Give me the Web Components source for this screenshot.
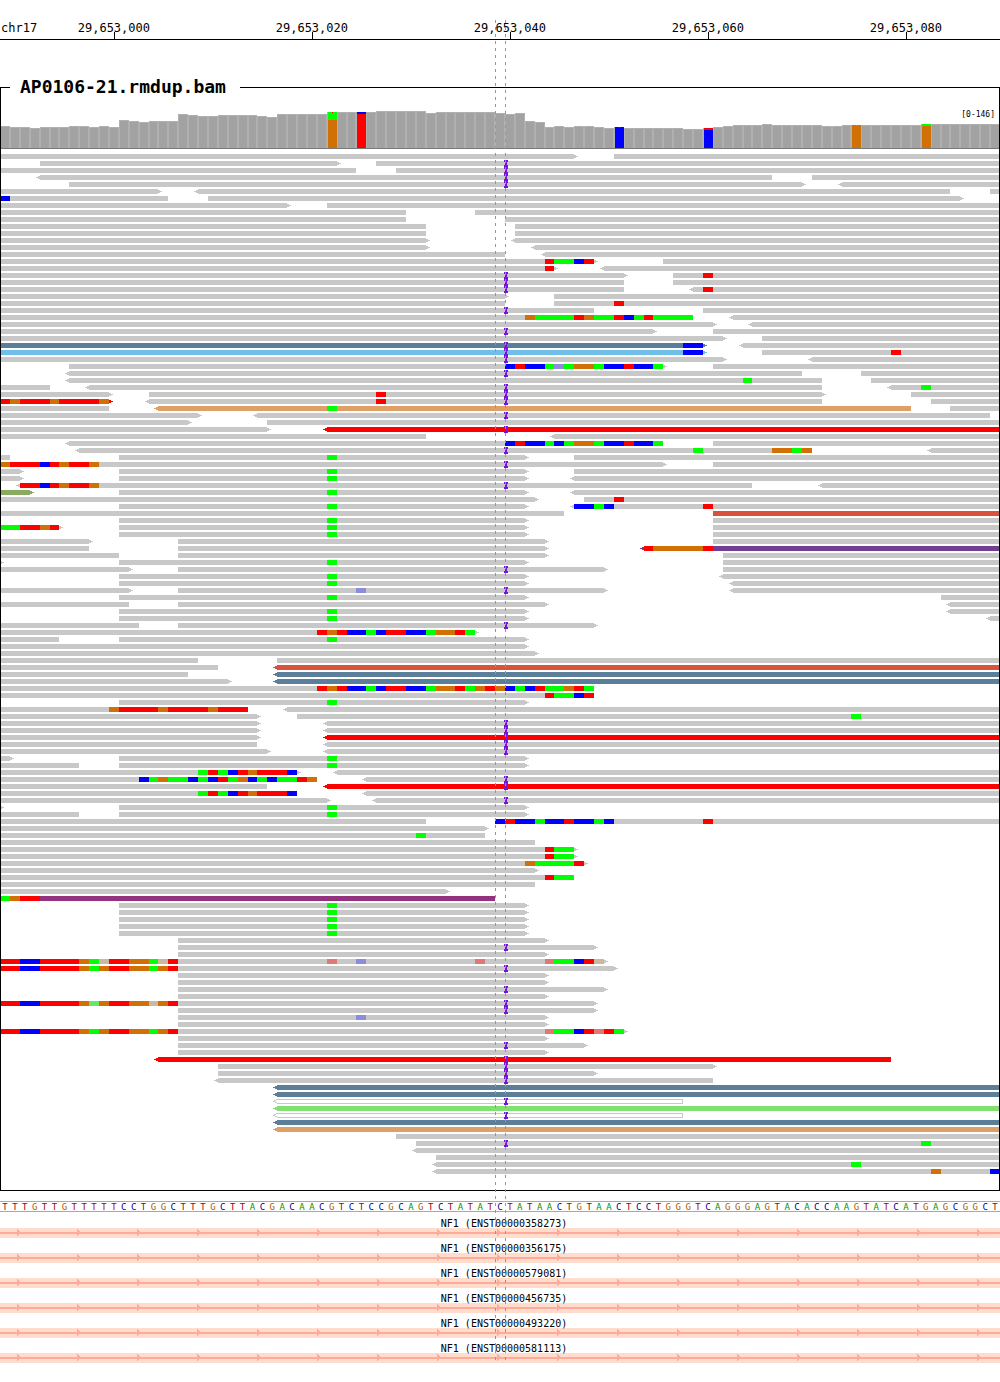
<!DOCTYPE html>
<html lang="en">
<head>
<meta charset="utf-8">
<title>AP0106-21.rmdup.bam</title>
<style>
  body { margin: 0; background: #fff; color: #000; font-family: "DejaVu Sans Mono", monospace; }
</style>
</head>
<body>
<genome-browser>
  <locus-ruler chromosome="chr17" first-tick="29653000" first-column="12" step="20"></locus-ruler>
  <alignment-track name="AP0106-21.rmdup.bam">
    <coverage-plot range="[0-146]"></coverage-plot>
    <read-pileup></read-pileup>
  </alignment-track>
  <base-sequence bases="TTTGTTGTTTTTCCTGGCTTTGCTTACGACAACGTCTCCGCAGTCTATATCTATAACTGTAACTCCTGGGTCAGGGAGTACACCAAGTATCATGAGCGGCT"></base-sequence>
  <gene-transcript>NF1 (ENST00000358273)</gene-transcript>
  <gene-transcript>NF1 (ENST00000356175)</gene-transcript>
  <gene-transcript>NF1 (ENST00000579081)</gene-transcript>
  <gene-transcript>NF1 (ENST00000456735)</gene-transcript>
  <gene-transcript>NF1 (ENST00000493220)</gene-transcript>
  <gene-transcript>NF1 (ENST00000581113)</gene-transcript>
</genome-browser>

<script>
const COLUMNS = 101;
const BASE = {
  A: '#00ff00', C: '#0000ff', G: '#d17105', T: '#ff0000',
  a: '#68e668', c: '#8c8cdc', g: '#ccb8a2', t: '#e07878'
};
const READ = {
  gray: '#c8c8c8', steel: '#5b7f99', sky: '#6fbfe8', orange: '#dea066', red: '#ff0000',
  olive: '#8aaa62', brick: '#d9533c', violet: '#733d90', plum: '#93327f', lime: '#80e070'
};

const rect = (x, y, w, h, fill) => `<rect x="${x}" y="${y}" width="${w}" height="${h}" fill="${fill}"/>`;

class GenomeBrowser extends HTMLElement {
  constructor() {
    super();
    this.attachShadow({ mode: 'open' }).innerHTML = `
      <style>
        :host { display: block; position: relative; overflow: hidden; padding-bottom: 19px; }
        .guide {
          position: absolute; top: 20px; bottom: 22px; width: 1px;
          background: repeating-linear-gradient(to bottom, #969696 0 3px, transparent 3px 7px);
          pointer-events: none;
        }
        .from { left: calc(100% * 50 / 101); }
        .to { left: calc(100% * 51 / 101); }
      </style>
      <slot></slot>
      <div class="guide from"></div>
      <div class="guide to"></div>`;
  }
}

class LocusRuler extends HTMLElement {
  connectedCallback() {
    const first = +this.getAttribute('first-tick');
    const column = +this.getAttribute('first-column');
    const step = +this.getAttribute('step');
    let ticks = '';
    for (let i = 0; column + i * step <= COLUMNS; i++) {
      const label = (first + i * step).toLocaleString('en-US');
      ticks += `<div class="tick" style="grid-column:${column + i * step}"><span>${label}</span><i></i></div>`;
    }
    this.attachShadow({ mode: 'open' }).innerHTML = `
      <style>
        :host {
          display: grid; grid-template-columns: repeat(${COLUMNS}, minmax(0, 1fr));
          padding-top: 21px; border-bottom: 1px solid #000;
          font-size: 12px; line-height: 14px; white-space: nowrap;
        }
        .name { grid-column: 1; grid-row: 1; padding-left: 1px; }
        .tick { grid-row: 1; display: flex; flex-direction: column; align-items: center; }
        i { width: 1px; height: 7px; margin-top: -3px; border-right: 1px solid #000; }
      </style>
      <span class="name">${this.getAttribute('chromosome')}</span>${ticks}`;
  }
}

class AlignmentTrack extends HTMLElement {
  connectedCallback() {
    this.attachShadow({ mode: 'open' }).innerHTML = `
      <style>
        :host { display: block; margin-top: 37px; }
        fieldset { margin: 0; padding: 0 0 14px; border: 1px solid #000; min-width: 0; }
        legend { margin-left: 9px; padding: 0 14px 2px 10px; font-size: 18px; font-weight: bold; line-height: 19px; }
      </style>
      <fieldset><legend>${this.getAttribute('name')}</legend><slot></slot></fieldset>`;
  }
}

/* Shared by the drawn tracks: maps base columns to whole pixels inside the one-pixel track frame. */
class ColumnPlot extends HTMLElement {
  connectedCallback() {
    this.attachShadow({ mode: 'open' }).innerHTML = `
      <style>
        :host { display: block; position: relative; }
        svg { display: block; width: 100%; height: ${this.plotHeight}px; overflow: hidden; }
        .range { position: absolute; top: 12px; right: 4px; font-size: 8px; line-height: 10px; }
        ${this.styles || ''}
      </style>
      <svg shape-rendering="crispEdges" aria-hidden="true"></svg>
      ${this.hasAttribute('range') ? `<span class="range">${this.getAttribute('range')}</span>` : ''}`;
    this.paint();
    new ResizeObserver(() => this.paint()).observe(this);
  }
  paint() {
    const width = this.clientWidth + 2;
    this.shadowRoot.querySelector('svg').innerHTML = this.draw(k => Math.round(k * width / COLUMNS) - 1);
  }
}

class CoveragePlot extends ColumnPlot {
  get plotHeight() { return 51; }
  draw(x) {
    // [number of columns, column height]
    const runs = [[1,22],[2,21],[1,20],[3,21],[2,22],[1,21],[1,22],[1,21],[1,28],[1,27],[1,26],[3,27],
      [1,34],[1,33],[2,32],[4,33],[1,32],[1,31],[5,34],[5,36],[5,37],[1,35],[6,36],[1,35],[1,34],[1,35],
      [1,27],[1,26],[1,21],[1,22],[1,21],[2,22],[1,21],[1,20],[1,21],[6,20],[2,19],[1,20],[1,21],[1,22],
      [3,23],[1,24],[5,23],[2,22],[8,23],[8,24]];
    // column: bases from the top, with their heights
    const variants = {
      33: [['A', 8], ['G', 28]], 36: [['C', 2], ['T', 34]], 62: [['C', 21]],
      71: [['T', 2], ['C', 18]], 86: [['G', 23]], 93: [['A', 2], ['G', 22]]
    };
    const specks = { 33: 'T', 62: 'T', 86: 'A' };
    let out = '', k = 0;
    for (const [count, height] of runs) {
      for (let n = 0; n < count; n++, k++) {
        const left = x(k), top = 50 - height;
        out += rect(left, top, x(k + 1) - left, height, '#b0b0b0');
        if (variants[k]) {
          let y = top;
          for (const [base, h] of variants[k]) { out += rect(left + 1, y, 9, h, BASE[base]); y += h; }
          if (specks[k]) out += rect(left + 5, top, 1, 1, BASE[specks[k]]);
        } else {
          out += rect(left + 1, top + 1, x(k + 1) - left - 2, height - 1, '#a2a2a2');
        }
      }
    }
    return out + rect(-1, 50, x(COLUMNS) + 1, 1, '#787878');
  }
}

/* One line per row. "<4-38>" is a read over columns 4 to 38 with its arrow heads, "33A" puts
   mismatched bases from column 33 on (lower case: low quality), "I" marks the insertion. */
const ROWS = `
0-58> 62-101
4-34> 38-101 I
0-36 40-101 I
<4-78 82-101 I
7-81> <85-101 I
0-16> <20-96 100-101
0-17 0C 21-97>
0-29> 33-101
0-41 48-101
0-41 51-101
0-43 52-101
0-43 52-101
0-43> <52-101
0-43> <54-101
0-51 <55-101
0-60> 55TAACT 67-101
0-56> 55T <61-101
0-63> 68-101 71T I
0-63 68-101 I
0-63 <70-101 71T I
0-51> 56-101
0-51 56-101 62T
0-60 71-101 I
0-70 53GAAAATGAATCATAAAA <74-101
0-72> <76-101
0-66> 72-101 I
0-73> 77-101
steel:0-71> 69CC <75-101 I
sky:0-71> 69CC 77-101 90T I
0-73> <82-101 I
7-67> 51CTCCAcAGGACCTCCA 72-101
<7-81 87-101 I
<7-83 75A 88-101
0-5 <9-83 <90-101 93A I
0-11> 15-83> 38T 92-101 I
red:0-11> 0TGTTTGTTTTG <15-83 38T 94-101 I
0-11 orange:<16-92 33A 96-101
0-20> <26-100 I
0-19> 27-101
0-27> red:<33-101 I
0-43 <56-101
<7-67 51CTCCACAGGACCTCCA 72-101
<8-82 70A 78GGAG <94-101 I
0-1 12-53> 33A 58-101
0-67> 0GTTTCTGTTG 72-101 I
0-2> 12-53> 33A 58-101
0-2> 12-53> 33A <58-101
<2-76 2TTCTGTTG <83-101 I
olive:0-3> 12-53> 33A <58-101
0-54> 59-101 62T
12-53> 33A <58-101 58CCAC 71T
0-57 brick:72-101
12-53> 33A 72-101
0-6> 0AATTGT 12-53> 33A 72-101
12-53> 33A 72-101
0-9> 18-55> 72-101
0-9 18-55> violet:<65-101 65TGGGGGT
0-12 18-55> 73-101
0-0> 12-53> 33A 73-101
0-13> 18-61> 73-101 I
12-53> 33A <73-101
12-53> 33A <74-101
0-13> 18-61> 36c <74-101 I
12-53> 33A 95-101
0-13 18-55> <96-101
12-53> 33A <96-101
12-53> 33A <100-101
0-14 18-60> I
0-48> 32TGTCCACTTCCAGGTA
0-6 12-53> 33A
0-53>
0-54>
0-20 28-101
0-22 brick:<28-101
0-19 steel:<28-101
0-23> steel:<28-101
0-60 32TGTCCACTTCCAGGTAGTGCACTAAGTA
0-60 55TAACT
12-53> 33A
0-25 11GTTTTGTTTTGTTT <29-101
0-26> 30-101 86A
0-26> <33-101 I
0-26> <33-101 I
0-26> red:<33-101 I
0-26 <33-101 I
0-27> <33-101 I
0-1> 12-53> 33A
0-8 12-53> 33A
0-30> 20ATACTGTTTC <34-101
0-32 14CAGAACACTAGCACAATG <37-101 I
0-27 red:<33-101 I
0-30 20ATACTGTTTC <37-101
0-33> <38-101 I
0-0> 12-53> 33A
0-8 12-53> 33A
0-43 50-101 50CTCCACCTCCAC 71T
0-49>
0-49 42A
0-54
0-58> 55TAA
0-58> 55TAA
0-59> 53GAAAAT
0-54>
0-58 55TAA
0-54
0-45>
plum:0-50 0AGTT
12-53> 33A
12-53> 33A
12-53> 33A
12-53> 33A
12-53> 33A
18-55>
18-60> I
18-55>
0-61> 0TTCCTTTTGAgTTGGAgT 33t 36c 48t 55tAACTg
0-62> 0TTCCTTTTGAGTTGGAGT I
18-55>
18-55>
18-61> I
18-55>
0-60> 0TTCCTTTTGaGTTGGgGT I
18-60> I
18-55> 36c
18-55>
0-63> 0TTCCTTTTGAGTTGGAGT 55tAACTtTA
18-55>
18-59> I
18-55>
red:<16-90 I
22-72> I
22-60> I
<22-72 I
steel:<28-101
steel:<28-101
open:<28-69 I
lime:<28-101
open:<28-69 I
steel:<28-101
orange:<28-101
40-101
42-101 93A I
<42-101
44-101
<44-101 86A
<44-101 94G 100C`.trim().split('\n');

class ReadPileup extends ColumnPlot {
  get plotHeight() { return ROWS.length * 7; }
  get styles() { return ':host { padding-top: 5px; }'; }
  draw(x) {
    let out = '';
    ROWS.forEach((row, i) => {
      const y = i * 7;
      for (const token of row.split(' ')) {
        let m;
        if (token === 'I') continue;
        if (m = token.match(/^(?:(\w+):)?(<?)(\d+)-(\d+)(>?)$/)) {
          const left = x(+m[3]), right = x(+m[4]);
          if (m[1] === 'open') { out += this.openRead(left, right, y); continue; }
          const fill = READ[m[1] || 'gray'];
          out += rect(left, y, right - left, 5, fill);
          if (m[2]) out += rect(left - 2, y + 1, 2, 3, fill) + rect(left - 4, y + 2, 2, 1, fill);
          if (m[5]) out += rect(right, y + 1, 2, 3, fill) + rect(right + 2, y + 2, 2, 1, fill);
        } else if (m = token.match(/^(\d+)(\w+)$/)) {
          [...m[2]].forEach((base, n) => {
            const left = x(+m[1] + n);
            out += rect(left, y, x(+m[1] + n + 1) - left, 5, BASE[base]);
          });
        }
      }
    });
    // Insertion marks lie over the neighbouring rows.
    ROWS.forEach((row, i) => {
      if (!row.endsWith(' I')) return;
      const left = x(51), y = i * 7 - 1, ink = '#7414dc';
      out += rect(left - 1, y, 4, 2, ink) + rect(left, y + 2, 2, 3, ink) + rect(left - 1, y + 5, 4, 2, ink);
    });
    return out;
  }
  openRead(left, right, y) {
    const ink = READ.gray;
    return rect(left - 1, y, right - left + 1, 1, ink) + rect(left, y + 4, right - left, 1, ink) +
      rect(right - 1, y, 1, 5, ink) + rect(left - 3, y + 1, 2, 1, ink) +
      rect(left - 4, y + 2, 2, 1, ink) + rect(left - 2, y + 3, 2, 1, ink);
  }
}

class BaseSequence extends HTMLElement {
  connectedCallback() {
    const cells = [...this.getAttribute('bases')].map(b => `<span class="${b}">${b}</span>`).join('');
    this.attachShadow({ mode: 'open' }).innerHTML = `
      <style>
        :host {
          display: grid; grid-template-columns: repeat(${COLUMNS}, minmax(0, 1fr)); margin-top: 10px;
          border: solid #a9a9a9; border-width: 1px 0; padding-top: 2px;
          font-size: 9px; line-height: 7px; text-align: center;
        }
        .A { color: #009600; } .C { color: #000096; } .G { color: #a85c00; } .T { color: #a80000; }
      </style>${cells}`;
  }
}

class GeneTranscript extends HTMLElement {
  constructor() {
    super();
    this.attachShadow({ mode: 'open' }).innerHTML = `
      <style>
        :host { display: block; }
        :host(:first-of-type) { margin-top: 1px; }
        .label { padding: 7px 0 0 8px; font-size: 10px; line-height: 8px; text-align: center; }
        svg { display: block; width: 100%; height: 10px; background: #ffdccc; }
      </style>
      <div class="label"><slot></slot></div>
      <svg aria-hidden="true">
        <defs>
          <pattern id="strand" x="17" width="60" height="10" patternUnits="userSpaceOnUse">
            <path d="M0 1h1v1h1v1h1v3h-1v1h-1v1h-1z" fill="#ffab9b" shape-rendering="crispEdges"/>
          </pattern>
        </defs>
        <rect width="100%" height="10" fill="url(#strand)"/>
        <rect y="4" width="100%" height="2" fill="#ffab9b"/>
      </svg>`;
  }
}

customElements.define('genome-browser', GenomeBrowser);
customElements.define('locus-ruler', LocusRuler);
customElements.define('alignment-track', AlignmentTrack);
customElements.define('coverage-plot', CoveragePlot);
customElements.define('read-pileup', ReadPileup);
customElements.define('base-sequence', BaseSequence);
customElements.define('gene-transcript', GeneTranscript);
</script>
</body>
</html>
